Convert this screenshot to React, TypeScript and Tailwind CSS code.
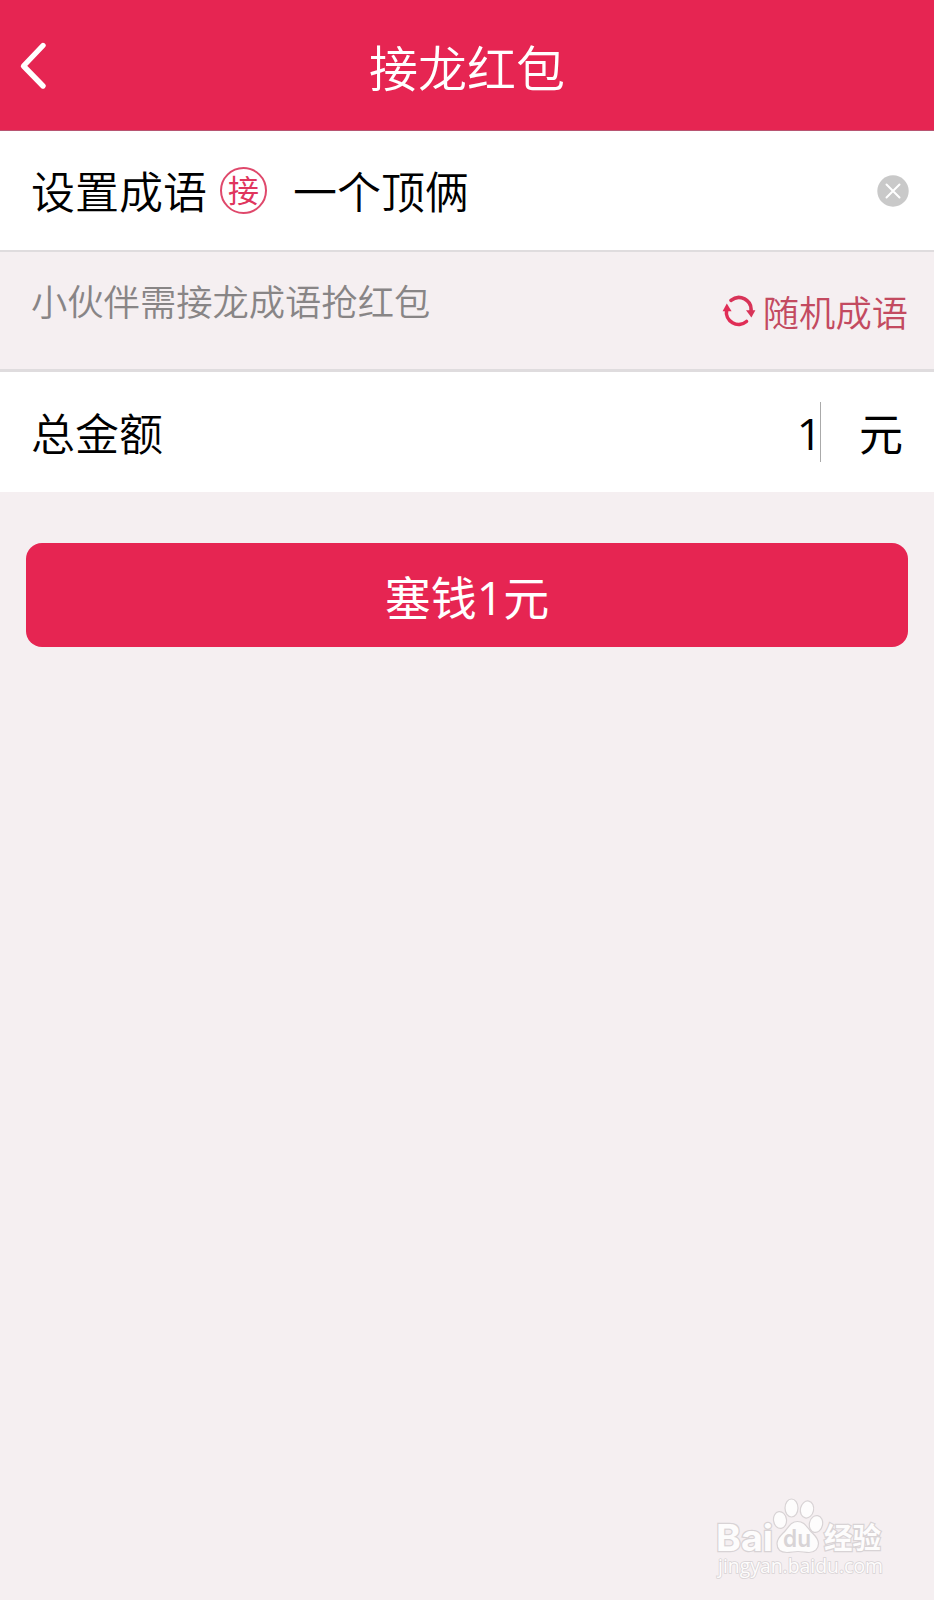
import React from 'react';

const RefreshIcon: React.FC = () => (
  <svg width="34" height="32" viewBox="0 0 34 32" fill="none" className="mb-1 shrink-0">
    <path d="M9 5.4A12.2 12.2 0 0 1 29 16" stroke="#d83358" strokeWidth="3.6" strokeLinecap="round" />
    <path d="M24.5 26.5A12.2 12.2 0 0 1 4.6 15" stroke="#e02d56" strokeWidth="3.6" strokeLinecap="round" />
    <path d="M24 15.2h9.4l-4 7.2z" fill="#d83358" />
    <path d="M.6 16.2h9L4.8 8.6z" fill="#e02d56" />
  </svg>
);

const Watermark: React.FC = () => (
  <svg
    width="180"
    height="90"
    viewBox="0 0 180 90"
    className="absolute right-[44px] bottom-[20px]"
    fill="#fdfcfc"
    stroke="#d8d3d5"
    strokeWidth="1.2"
  >
    <g paintOrder="stroke">
      <text x="6" y="61" fontSize="37" fontWeight="700" textLength="57" lengthAdjust="spacingAndGlyphs" strokeWidth="2.4" fontFamily="Inter, sans-serif">Bai</text>
      <text x="114" y="59" fontSize="29" fontWeight="700" textLength="57" lengthAdjust="spacingAndGlyphs" strokeWidth="2.4" fontFamily='"Noto Sans CJK SC", sans-serif'>经验</text>
      <text x="8" y="83" fontSize="20" textLength="165" lengthAdjust="spacingAndGlyphs" strokeWidth="1.6" fontFamily='"Open Sans", sans-serif'>jingyan.baidu.com</text>
    </g>
    <ellipse cx="70" cy="30" rx="6.5" ry="8.5" transform="rotate(-8 70 30)" />
    <ellipse cx="81.5" cy="18" rx="6.5" ry="9" />
    <ellipse cx="97" cy="19.5" rx="6.6" ry="8.6" transform="rotate(12 97 19.5)" />
    <ellipse cx="106" cy="34" rx="6.6" ry="8.5" transform="rotate(12 106 34)" />
    <path d="M87.5 31.5c-6.5 0-8.5 5-12 9s-8.500 7-8.500 13c0 6 4 9 10 9c4 0 7-1 11-1s7 1 11 1c6 0 9.500-4 9.500-9c0-6-5-9-8.500-13s-6-9-12.500-9z" />
    <text x="73" y="57" fontSize="24" fontWeight="600" textLength="28" lengthAdjust="spacingAndGlyphs" fill="#d8d4d6" stroke="none" fontFamily="Inter, sans-serif">du</text>
  </svg>
);

const App: React.FC = () => {
  return (
    <div className="relative flex h-[1600px] w-[934px] flex-col overflow-hidden bg-[#f5eff1] font-['Noto_Sans','Noto_Sans_CJK_SC',sans-serif] text-[44px] text-black">
      {/* Header */}
      <header className="grid h-[131px] shrink-0 grid-cols-[1fr_auto_1fr] items-center border-b border-[#b85572] bg-[#e62552] text-white">
        <svg width="50" height="60" viewBox="0 0 50 60" fill="none" className="mt-0.5 ml-[7px]">
          <path d="M36 9.5L16.5 30L36 50" stroke="currentColor" strokeWidth="5.4" strokeLinecap="round" strokeLinejoin="round" />
        </svg>
        <h1 className="mt-[5px] text-[49px] leading-[60px] font-[350]">接龙红包</h1>
      </header>

      {/* Idiom */}
      <section className="flex h-[119px] shrink-0 items-center bg-white pr-[25px] pl-[31px]">
        <span className="mt-[3px] leading-[60px] font-[350]">设置成语</span>
        <span className="ml-[13px] flex size-[47px] items-center justify-center rounded-full border-2 border-[#df486b] pb-0.5 text-[31px] leading-[40px] text-[#e0355d]">接</span>
        <span className="mt-[3px] ml-[26px] leading-[60px] font-[350]">一个顶俩</span>
        <svg width="32" height="32" viewBox="0 0 32 32" className="ml-auto">
          <circle cx="16" cy="16" r="15.7" fill="#c9c9c9" />
          <path d="M9.5 9.5l13 13M22.5 9.5l-13 13" stroke="#fff" strokeWidth="2" strokeLinecap="round" />
        </svg>
      </section>

      {/* Hint */}
      <section className="flex h-[122px] shrink-0 items-start justify-between border-t-2 border-b-3 border-[#dfdcde] pr-[26px] pl-[31px] text-[36.3px] leading-[50px] font-[350]">
        <span className="mt-[25px] text-[#888586]">小伙伴需接龙成语抢红包</span>
        <div className="mt-9 flex items-center gap-[7px] text-[#c34a60]">
          <RefreshIcon />
          <span>随机成语</span>
        </div>
      </section>

      {/* Amount */}
      <section className="flex h-[120px] shrink-0 items-center bg-white px-[31px]">
        <span className="mt-1 leading-[60px] font-[350]">总金额</span>
        <span className="mt-0.5 mr-[-2px] ml-auto font-['Open_Sans',sans-serif] leading-[60px]">1</span>
        <span className="h-[60px] w-px bg-[#aaa]" />
        <span className="mt-1 ml-[38px] leading-[60px]">元</span>
      </section>

      <button className="mx-[26px] mt-[51px] h-[104px] shrink-0 rounded-[16px] bg-[#e62552] pt-1 text-[46px] leading-[60px] text-white">
        塞钱<span className="font-['Open_Sans',sans-serif]">1</span>元
      </button>

      <Watermark />
    </div>
  );
};

export default App;
